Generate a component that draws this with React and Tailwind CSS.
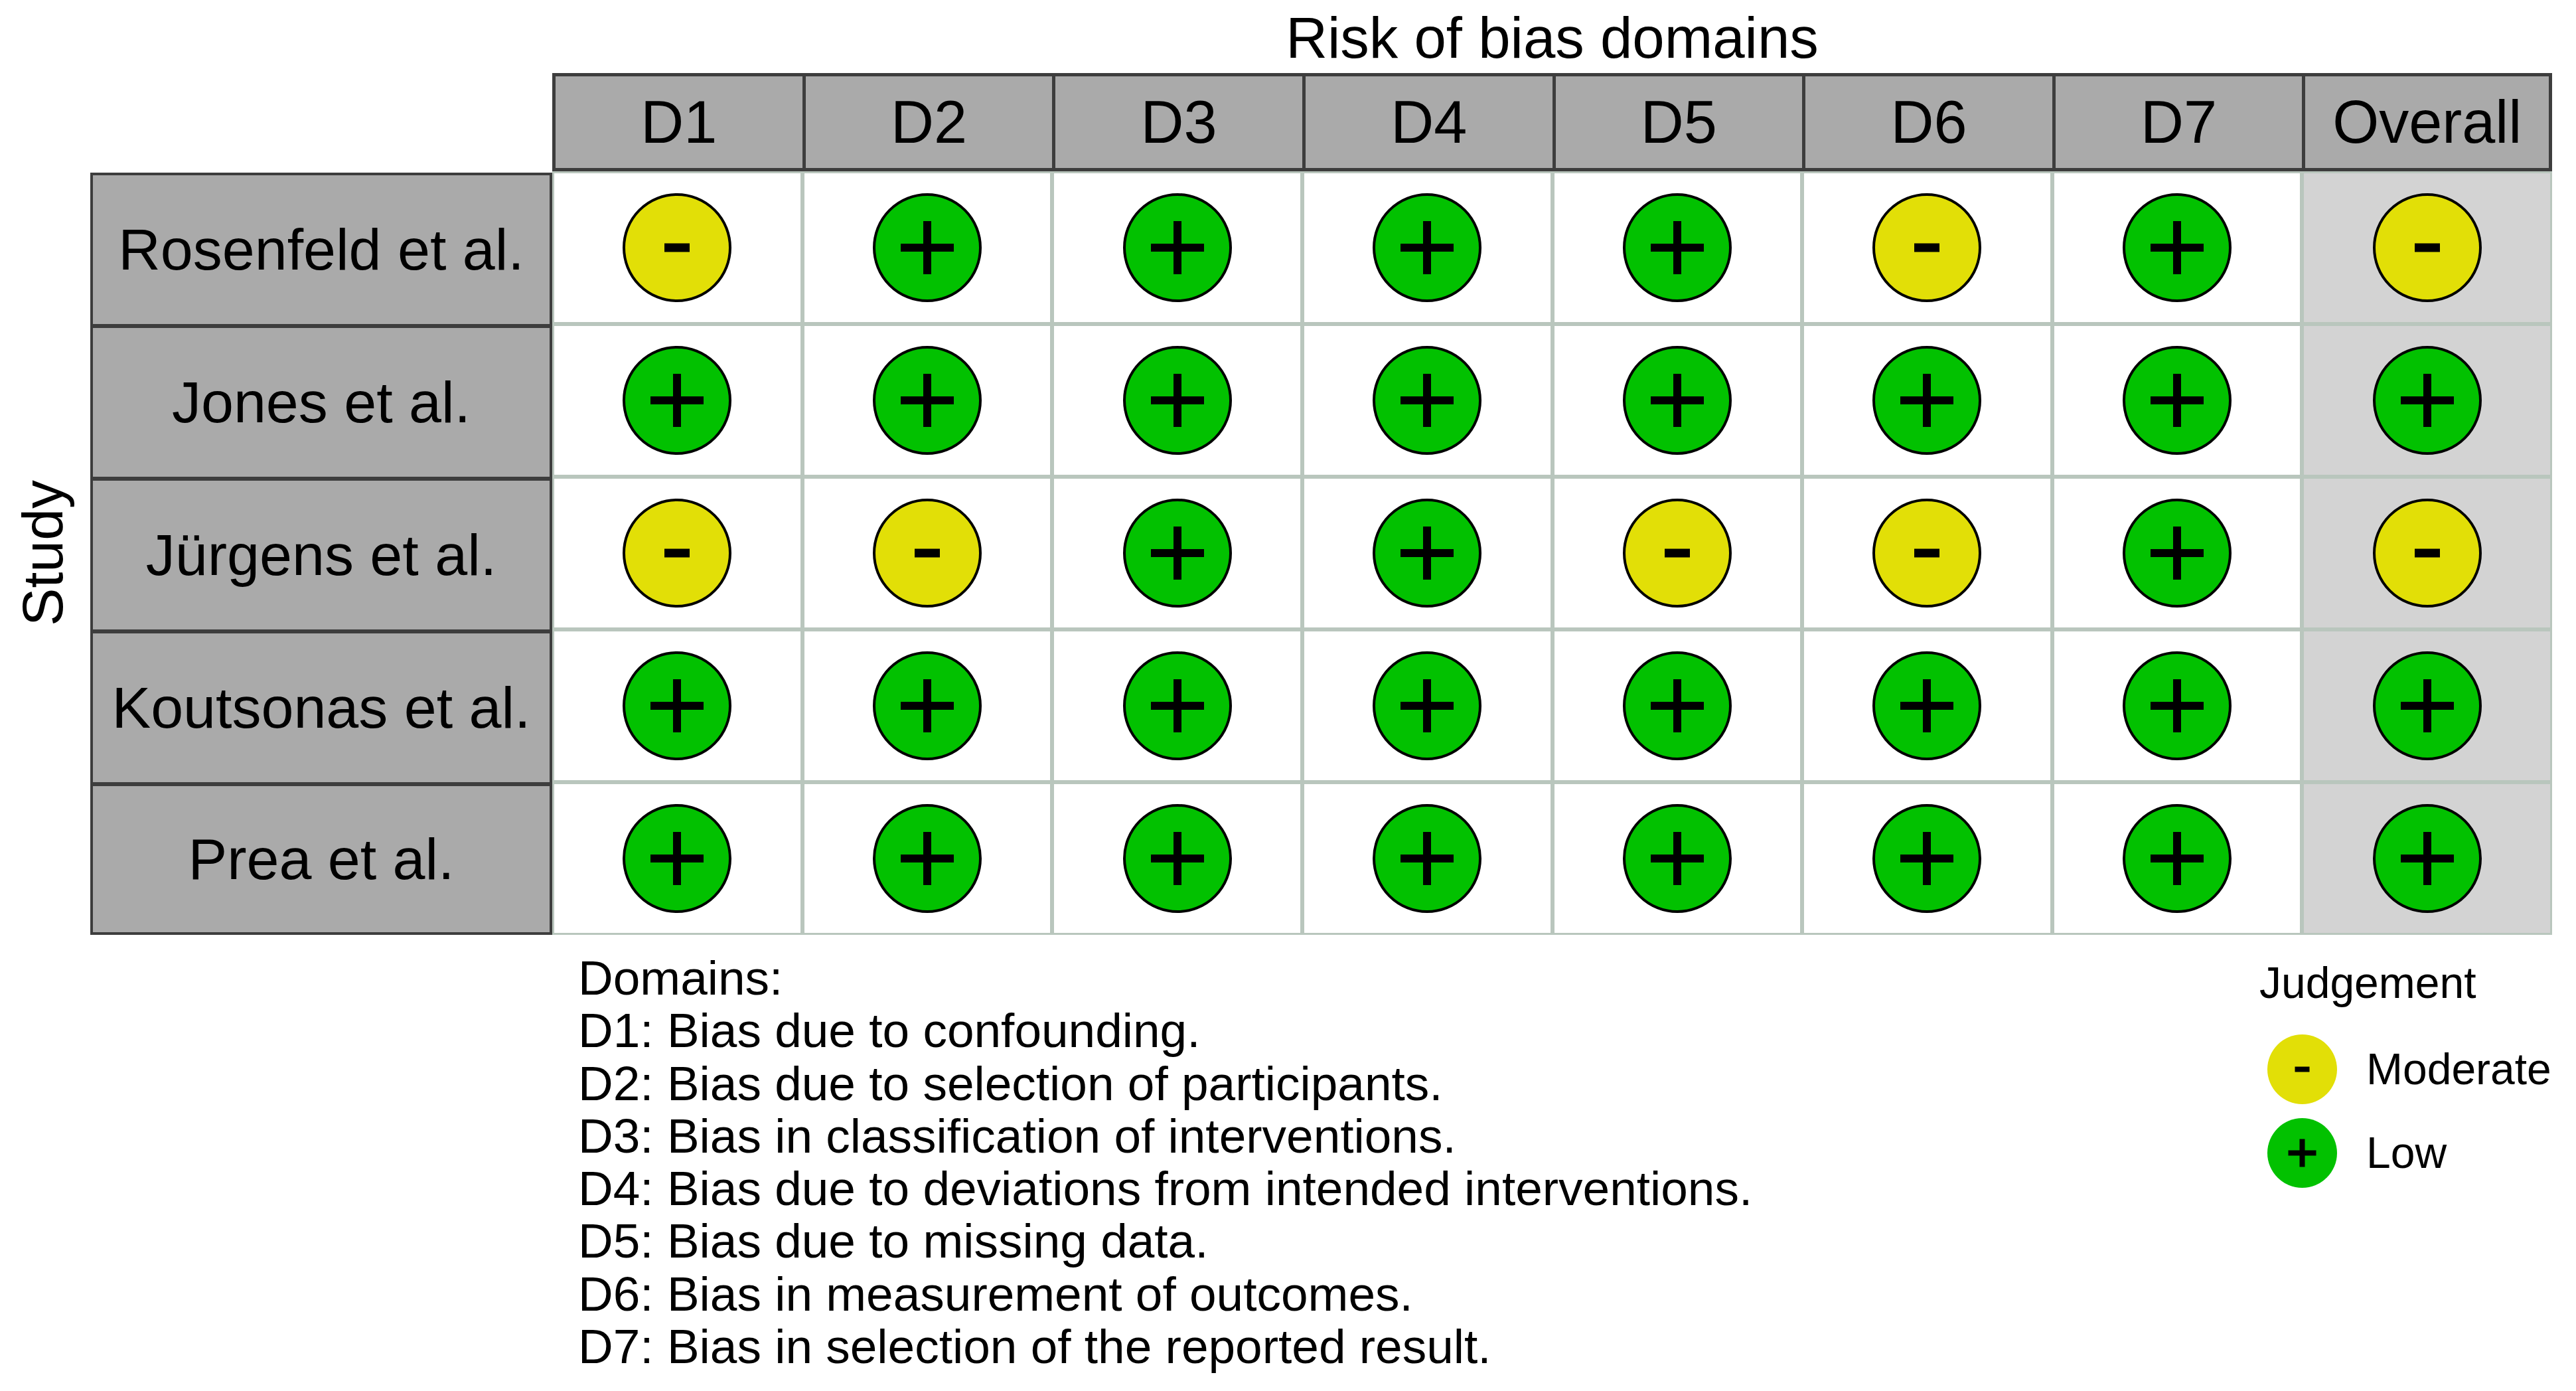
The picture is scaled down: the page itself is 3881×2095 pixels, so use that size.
import React from "react";

/* ---------- risk of bias traffic-light plot ---------- */

const COLORS = {
  L: "#02C100",
  M: "#E2DF07",
};

const domains = ["D1", "D2", "D3", "D4", "D5", "D6", "D7", "Overall"];

const studies = [
  { name: "Rosenfeld et al.", marks: ["M", "L", "L", "L", "L", "M", "L", "M"] },
  { name: "Jones et al.", marks: ["L", "L", "L", "L", "L", "L", "L", "L"] },
  { name: "Jürgens et al.", marks: ["M", "M", "L", "L", "M", "M", "L", "M"] },
  { name: "Koutsonas et al.", marks: ["L", "L", "L", "L", "L", "L", "L", "L"] },
  { name: "Prea et al.", marks: ["L", "L", "L", "L", "L", "L", "L", "L"] },
];

const notes = [
  "D1: Bias due to confounding.",
  "D2: Bias due to selection of participants.",
  "D3: Bias in classification of interventions.",
  "D4: Bias due to deviations from intended interventions.",
  "D5: Bias due to missing data.",
  "D6: Bias in measurement of outcomes.",
  "D7: Bias in selection of the reported result.",
];

function Mark({ level }) {
  return (
    <svg width="164" height="164" viewBox="0 0 164 164">
      <circle cx="82" cy="82" r="80" fill={COLORS[level]} stroke="#000" strokeWidth="4" />
      {level === "L" ? (
        <>
          <rect x="42" y="76" width="80" height="12" fill="#000" />
          <rect x="76" y="42" width="12" height="80" fill="#000" />
        </>
      ) : (
        <rect x="63" y="75.5" width="38" height="13" fill="#000" />
      )}
    </svg>
  );
}

function LegendMark({ level }) {
  return (
    <svg width="105" height="105" viewBox="0 0 105 105">
      <circle cx="52.5" cy="52.5" r="52.5" fill={COLORS[level]} />
      {level === "L" ? (
        <>
          <rect x="31.5" y="48.5" width="42" height="8" fill="#000" />
          <rect x="48.5" y="31.5" width="8" height="42" fill="#000" />
        </>
      ) : (
        <rect x="41.5" y="48.5" width="22" height="8" fill="#000" />
      )}
    </svg>
  );
}

export default function App() {
  return (
    <div
      className="w-[3881px] h-[2095px] bg-white text-black overflow-hidden"
      style={{ fontFamily: '"Liberation Sans", Arial, sans-serif' }}
    >
      <div className="grid grid-cols-[136px_696px_repeat(8,376.625px)] grid-rows-[110px_148px_repeat(5,230px)]">
        {/* title */}
        <div className="col-start-3 col-span-8 row-start-1 flex items-center justify-center pt-[3px] text-[87px] leading-none">
          Risk of bias domains
        </div>

        {/* header strip */}
        {domains.map((d, i) => (
          <div
            key={d}
            style={{ gridColumnStart: i + 3, gridRowStart: 2 }}
            className={
              "bg-[#aaaaaa] border-[#3d3d3d] border-y-[5px] border-l-[5px] flex items-center justify-center text-[90px] leading-none " +
              (i === domains.length - 1 ? "border-r-[5px]" : "")
            }
          >
            {d}
          </div>
        ))}

        {/* y axis label */}
        <div className="col-start-1 row-start-3 row-span-5 flex items-center justify-center pr-[8px]">
          <span className="[writing-mode:vertical-rl] rotate-180 text-[86px] leading-none">
            Study
          </span>
        </div>

        {studies.map((s, r) => (
          <React.Fragment key={s.name}>
            <div
              style={{ gridColumnStart: 2, gridRowStart: r + 3 }}
              className={
                "bg-[#aaaaaa] border-[#3d3d3d] border-x-[4px] flex items-center justify-center text-[88px] leading-none " +
                (r === 0 ? "border-t-[4px] mt-[2px] " : "border-t-[6px] ") +
                (r === studies.length - 1 ? "border-b-[4px]" : "")
              }
            >
              {s.name}
            </div>
            {s.marks.map((m, c) => (
              <div
                key={c}
                style={{ gridColumnStart: c + 3, gridRowStart: r + 3 }}
                className={
                  "border-[3px] border-[#b9c6bd] flex items-center justify-center " +
                  (c === 7 ? "bg-[#d3d3d3]" : "bg-white")
                }
              >
                <Mark level={m} />
              </div>
            ))}
          </React.Fragment>
        ))}
      </div>

      {/* legends */}
      <div className="flex mt-[25px]">
        <div className="w-[871px] shrink-0" />
        <div className="flex-1 flex flex-col text-[73px] leading-[79.3px]">
          <div>Domains:</div>
          {notes.map((n) => (
            <div key={n}>{n}</div>
          ))}
        </div>
        <div className="w-[477px] shrink-0 flex flex-col mt-[7px]">
          <div className="text-[66px] leading-[80px]">Judgement</div>
          <div className="flex flex-col mt-[27px]">
            {[
              ["M", "Moderate"],
              ["L", "Low"],
            ].map(([lv, label]) => (
              <div key={lv} className="h-[126px] flex items-center">
                <div className="w-[161px] shrink-0 pl-[12px] flex items-center">
                  <LegendMark level={lv} />
                </div>
                <div className="text-[66px] leading-none">{label}</div>
              </div>
            ))}
          </div>
        </div>
      </div>
    </div>
  );
}
